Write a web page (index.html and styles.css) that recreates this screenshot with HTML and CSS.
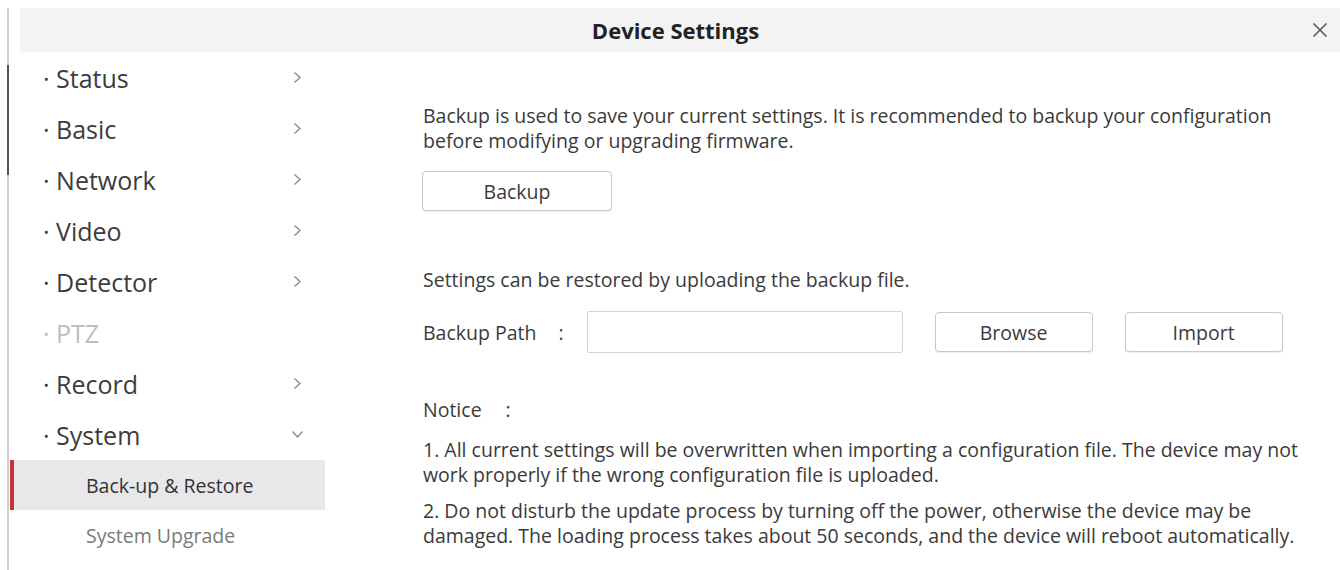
FILE: index.html
```html
<!DOCTYPE html>
<html lang="en">
<head>
<meta charset="utf-8">
<title>Device Settings</title>
<link rel="stylesheet" href="styles.css">
</head>
<body>
<div class="page">
  <div class="rail">
    <div class="rail-gap"></div>
    <div class="rail-thumb"></div>
  </div>
  <div class="dialog">
    <header class="dlg-header">
      <span></span>
      <h1 class="dlg-title">Device Settings</h1>
      <button class="dlg-close" aria-label="Close">
        <svg width="16" height="16" viewBox="0 0 16 16"><path d="M1.5 1.5 L14.5 14.5 M14.5 1.5 L1.5 14.5" stroke="#555" stroke-width="1.5" fill="none"/></svg>
      </button>
    </header>
    <div class="dlg-body">
      <nav class="sidebar">
        <div class="nav-item"><span class="nav-label">· Status</span><svg class="chev" width="9" height="13" viewBox="0 0 9 13"><path d="M1.5 1.5 L7 6.5 L1.5 11.5" stroke="#888" stroke-width="1.3" fill="none"/></svg></div>
        <div class="nav-item"><span class="nav-label">· Basic</span><svg class="chev" width="9" height="13" viewBox="0 0 9 13"><path d="M1.5 1.5 L7 6.5 L1.5 11.5" stroke="#888" stroke-width="1.3" fill="none"/></svg></div>
        <div class="nav-item"><span class="nav-label">· Network</span><svg class="chev" width="9" height="13" viewBox="0 0 9 13"><path d="M1.5 1.5 L7 6.5 L1.5 11.5" stroke="#888" stroke-width="1.3" fill="none"/></svg></div>
        <div class="nav-item"><span class="nav-label">· Video</span><svg class="chev" width="9" height="13" viewBox="0 0 9 13"><path d="M1.5 1.5 L7 6.5 L1.5 11.5" stroke="#888" stroke-width="1.3" fill="none"/></svg></div>
        <div class="nav-item"><span class="nav-label">· Detector</span><svg class="chev" width="9" height="13" viewBox="0 0 9 13"><path d="M1.5 1.5 L7 6.5 L1.5 11.5" stroke="#888" stroke-width="1.3" fill="none"/></svg></div>
        <div class="nav-item disabled"><span class="nav-label">· PTZ</span></div>
        <div class="nav-item"><span class="nav-label">· Record</span><svg class="chev" width="9" height="13" viewBox="0 0 9 13"><path d="M1.5 1.5 L7 6.5 L1.5 11.5" stroke="#888" stroke-width="1.3" fill="none"/></svg></div>
        <div class="nav-item"><span class="nav-label">· System</span>
          <svg class="chev-down" width="13" height="9" viewBox="0 0 13 9"><path d="M1.5 1.5 L6.5 7 L11.5 1.5" stroke="#888" stroke-width="1.3" fill="none"/></svg>
        </div>
        <div class="sub-item active">Back-up &amp; Restore</div>
        <div class="sub-item">System Upgrade</div>
      </nav>
      <main class="content">
        <p class="text">Backup is used to save your current settings. It is recommended to backup your configuration<br>before modifying or upgrading firmware.</p>
        <button class="btn btn-backup">Backup</button>
        <p class="text restore-text">Settings can be restored by uploading the backup file.</p>
        <div class="path-row">
          <span class="path-label">Backup Path</span>
          <span class="colon">:</span>
          <input class="path-input" type="text">
          <button class="btn btn-side">Browse</button>
          <button class="btn btn-side">Import</button>
        </div>
        <div class="notice-head"><span>Notice</span><span class="colon">:</span></div>
        <p class="text notice">1. All current settings will be overwritten when importing a configuration file. The device may not<br>work properly if the wrong configuration file is uploaded.</p>
        <p class="text notice">2. Do not disturb the update process by turning off the power, otherwise the device may be<br>damaged. The loading process takes about 50 seconds, and the device will reboot automatically.</p>
      </main>
    </div>
  </div>
</div>
</body>
</html>
```

FILE: styles.css
```css
* { box-sizing: border-box; }
html, body { margin: 0; padding: 0; background: #fff; }
body {
  font-family: "Open Sans", "Liberation Sans", sans-serif;
  color: #3a3a3a;
  width: 1340px;
  height: 570px;
  overflow: hidden;
}
.page {
  display: flex;
  padding-top: 8px;
  height: 570px;
}
.rail {
  width: 2px;
  margin-left: 7px;
  background: #cfcfcf;
  display: flex;
  flex-direction: column;
}
.rail-gap { height: 57px; }
.rail-thumb { height: 110px; background: #555; }
.dialog {
  margin-left: 1px;
  flex: 1;
  display: flex;
  flex-direction: column;
}
.dlg-header {
  margin-left: 10px;
  height: 44px;
  background: #f3f3f3;
  display: grid;
  grid-template-columns: 1fr auto 1fr;
  align-items: center;
}
.dlg-title {
  margin: 0 9px 0 0;
  font-size: 22px;
  font-weight: 700;
  color: #222;
  line-height: 1;
}
.dlg-close {
  justify-self: end;
  margin-right: 12px;
  border: 0;
  background: none;
  padding: 0;
  width: 16px;
  height: 16px;
  display: flex;
}
.dlg-body {
  display: flex;
  flex: 1;
}
.sidebar {
  width: 315px;
  display: flex;
  flex-direction: column;
}
.nav-item {
  height: 51px;
  padding: 0 22px 0 33px;
  display: flex;
  align-items: center;
  justify-content: space-between;
  font-size: 25px;
  color: #3c3c3c;
}
.nav-item.disabled { color: #bdbdbd; }
.chev { margin-right: 1px; }
.chev-down { margin-right: -1px; }
.sub-item {
  height: 51px;
  display: flex;
  align-items: center;
  padding-left: 76px;
  font-size: 19.5px;
  color: #7a7a7a;
}
.sub-item.active {
  height: 50px;
  background: #e8e8ea;
  color: #333;
  border-left: 4px solid #c8323a;
  padding-left: 72px;
}
.content {
  flex: 1;
  padding: 51px 0 0 98px;
}
.text {
  margin: 0;
  font-size: 19.5px;
  line-height: 25px;
  white-space: nowrap;
}
.btn {
  font-family: inherit;
  font-size: 19.5px;
  color: #3a3a3a;
  background: #fff;
  border: 1px solid #c8c8c8;
  border-radius: 4px;
  box-shadow: 0 1px 1px rgba(0,0,0,0.08);
  padding: 0;
}
.btn-backup {
  display: block;
  margin: 18px 0 0 -1px;
  width: 190px;
  height: 40px;
}
.restore-text { margin-top: 56px; }
.path-row {
  display: flex;
  align-items: center;
  margin-top: 19px;
  height: 42px;
}
.path-label { font-size: 19.5px; }
.colon { font-size: 19.5px; margin-left: 22px; }
.path-input {
  margin-left: 23px;
  width: 316px;
  height: 42px;
  border: 1px solid #d4d4d4;
  border-radius: 2px;
}
.btn-side {
  margin-left: 32px;
  width: 158px;
  height: 40px;
}
.notice-head {
  margin-top: 44px;
  font-size: 19.5px;
  line-height: 25px;
}
.notice-head .colon { margin-left: 24px; }
.notice { margin-top: 15px; }
.notice + .notice { margin-top: 11px; }
```
